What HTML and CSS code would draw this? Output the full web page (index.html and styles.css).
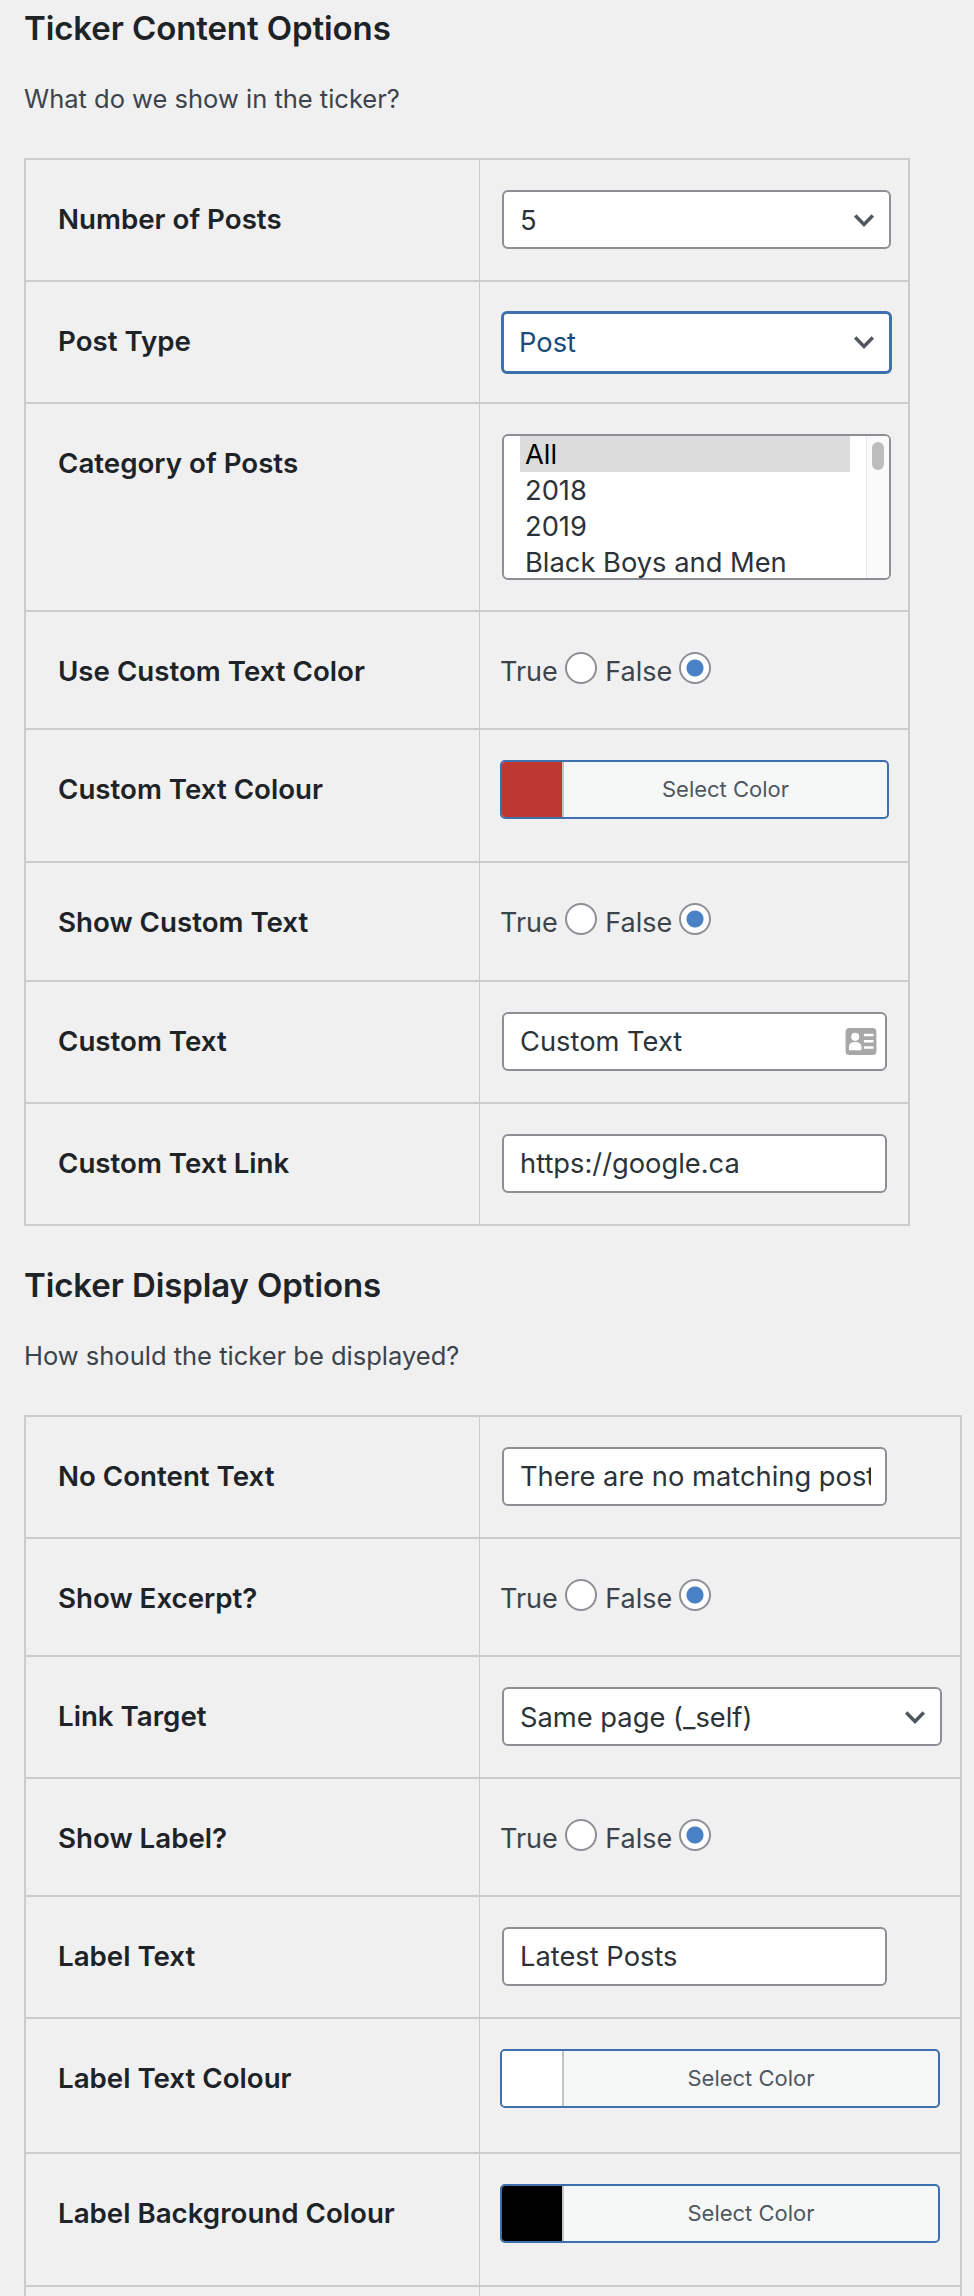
FILE: index.html
```html
<!DOCTYPE html>
<html lang="en">
<head>
<meta charset="utf-8">
<title>Ticker Options</title>
<link rel="stylesheet" href="styles.css">
</head>
<body>
<section class="group">
  <h2>Ticker Content Options</h2>
  <p class="intro">What do we show in the ticker?</p>
  <table class="opts narrow">
    <tr class="h122"><th>Number of Posts</th><td><div class="field select w388">5<svg class="chev" viewBox="0 0 20 12"><path d="M2 2l8 8 8-8"/></svg></div></td></tr>
    <tr class="h122"><th>Post Type</th><td><div class="field select w388 focus">Post<svg class="chev" viewBox="0 0 20 12"><path d="M2 2l8 8 8-8"/></svg></div></td></tr>
    <tr class="h208"><th>Category of Posts</th><td>
      <div class="listbox">
        <div class="items"><div class="item on">All</div><div class="item">2018</div><div class="item">2019</div><div class="item">Black Boys and Men</div></div>
        <div class="bar"><span class="thumb"></span></div>
      </div></td></tr>
    <tr class="h118"><th>Use Custom Text Color</th><td class="radios"><span>True</span><i class="radio"></i><span>False</span><i class="radio on"></i></td></tr>
    <tr class="h133"><th>Custom Text Colour</th><td class="pick"><div class="picker w389"><span class="swatch red"></span><span class="sel">Select Color</span></div></td></tr>
    <tr class="h119"><th>Show Custom Text</th><td class="radios"><span>True</span><i class="radio"></i><span>False</span><i class="radio on"></i></td></tr>
    <tr class="h122"><th>Custom Text</th><td><div class="field w385">Custom Text<svg class="card" viewBox="0 0 32 28"><path fill-rule="evenodd" d="M4 0h24a4 4 0 0 1 4 4v20a4 4 0 0 1-4 4H4a4 4 0 0 1-4-4V4a4 4 0 0 1 4-4zM10 5a4.2 4.2 0 1 0 0 8.4A4.2 4.2 0 0 0 10 5zM3.500 23h13v-3.500c0-3-2.500-5-6.500-5s-6.500 2-6.500 5zM19 6v2.500h10V6zM19 12.500V15h10v-2.500zM19 19v2.500h10V19z"/></svg></div></td></tr>
    <tr class="h122"><th>Custom Text Link</th><td><div class="field w385">https://google.ca</div></td></tr>
  </table>
</section>
<section class="group second">
  <h2>Ticker Display Options</h2>
  <p class="intro">How should the ticker be displayed?</p>
  <table class="opts wide">
    <tr class="h122"><th>No Content Text</th><td><div class="field w385 clip"><span class="cliptext">There are no matching posts</span></div></td></tr>
    <tr class="h118"><th>Show Excerpt?</th><td class="radios"><span>True</span><i class="radio"></i><span>False</span><i class="radio on"></i></td></tr>
    <tr class="h122"><th>Link Target</th><td><div class="field select w439">Same page (_self)<svg class="chev" viewBox="0 0 20 12"><path d="M2 2l8 8 8-8"/></svg></div></td></tr>
    <tr class="h118"><th>Show Label?</th><td class="radios"><span>True</span><i class="radio"></i><span>False</span><i class="radio on"></i></td></tr>
    <tr class="h122"><th>Label Text</th><td><div class="field w385">Latest Posts</div></td></tr>
    <tr class="h135"><th>Label Text Colour</th><td class="pick"><div class="picker w439"><span class="swatch white"></span><span class="sel">Select Color</span></div></td></tr>
    <tr class="h133"><th>Label Background Colour</th><td class="pick"><div class="picker w439"><span class="swatch black"></span><span class="sel">Select Color</span></div></td></tr>
    <tr class="h120"><th></th><td></td></tr>
  </table>
</section>
</body>
</html>
```
FILE: styles.css
```css
html, body { margin: 0; height: 2296px; overflow: hidden; background: #f0f0f1; }
body { padding: 0 0 0 24px; font-family: Inter, "Noto Sans", sans-serif; color: #3c434a; box-sizing: border-box; }
h2 { margin: 0; padding-top: 8px; font-size: 33px; line-height: 40px; font-weight: 600; color: #1d2327; letter-spacing: -0.1px; }
.intro { margin: 0; padding-top: 35px; font-size: 25.500px; line-height: 32px; height: 75px; }
.second { margin-top: 31px; }
.opts { border-collapse: collapse; table-layout: fixed; border: 2px solid #ccc; }
.narrow { width: 886px; }
.wide { width: 938px; }
.opts tr { border-bottom: 2px solid #ccc; }
.opts th { width: 421px; padding: 39px 0 0 32px; text-align: left; vertical-align: top; font-size: 27.700px; line-height: 40px; font-weight: 600; color: #1d2327; border-right: 1.500px solid #ccc; }
.opts td { vertical-align: top; padding: 30px 0 0 22px; }
.h118 { height: 118px; } .h119 { height: 119px; } .h120 { height: 120px; } .h122 { height: 122px; }
.h133 { height: 133px; } .h135 { height: 135px; } .h208 { height: 208px; }
.field { position: relative; box-sizing: border-box; height: 59px; padding: 0 16px; background: #fff; border: 2px solid #8c8f94; border-radius: 6px; font-size: 27.300px; line-height: 56px; color: #2c3338; }
.select { line-height: 58px; }
.w385 { width: 385px; } .w388 { width: 389px; } .w389 { width: 389px; } .w439 { width: 440px; }
.select svg.chev { position: absolute; right: 14px; top: 21px; width: 22px; height: 14px; fill: none; stroke: #50575e; stroke-width: 3.200; }
.focus { border: 3.500px solid #3f70ae; height: 63px; margin: -1px 0 0 -1px; width: 391px; padding-left: 15px; line-height: 58px; color: #184a7c; }
.card { position: absolute; right: 8px; top: 14px; width: 32px; height: 27px; fill: #a7a7a7; }
.clip .cliptext { display: block; width: 351px; overflow: hidden; white-space: nowrap; }
.clip { padding-right: 16px; }
.listbox { display: flex; box-sizing: border-box; width: 389px; height: 146px; background: #fff; border: 2px solid #8c8f94; border-radius: 6px; overflow: hidden; font-size: 27.300px; line-height: 38px; color: #2c3338; }
.items { flex: 1; padding: 0 16px 0 16px; overflow: hidden; }
.item { padding-left: 5px; height: 36px; white-space: nowrap; }
.item.on { background: #dcdcdc; color: #000; }
.bar { width: 22px; border-left: 1px solid #e8e8e8; background: #fafafa; position: relative; margin-left: 0; }
.thumb { position: absolute; left: 5px; top: 6px; width: 12px; height: 28px; background: #bdbdbd; border-radius: 6px; }
.radios { font-size: 27px; line-height: 40px; }
.opts td.radios { padding: 40px 0 0 20px; }
.radios span, .radio { display: inline-block; vertical-align: top; }
.radio { box-sizing: border-box; width: 32px; height: 32px; margin: 0 8.500px 0 7px; border: 2px solid #8c8f94; border-radius: 50%; background: #fff; }
.radio.on { background: radial-gradient(circle, #4a80c4 0 8px, #fff 9px); }
.picker { display: flex; box-sizing: border-box; height: 59px; border: 2px solid #3f70ae; border-radius: 5px; overflow: hidden; background: #f6f7f7; font-size: 22px; line-height: 55px; color: #50575e; }
.opts td.pick { padding: 30px 0 0 20px; }
.swatch { width: 60px; border-right: 2px solid #c3c4c7; }
.red { background: #bf3731; }
.white { background: #fff; }
.black { background: #000; }
.sel { flex: 1; text-align: center; }
```
